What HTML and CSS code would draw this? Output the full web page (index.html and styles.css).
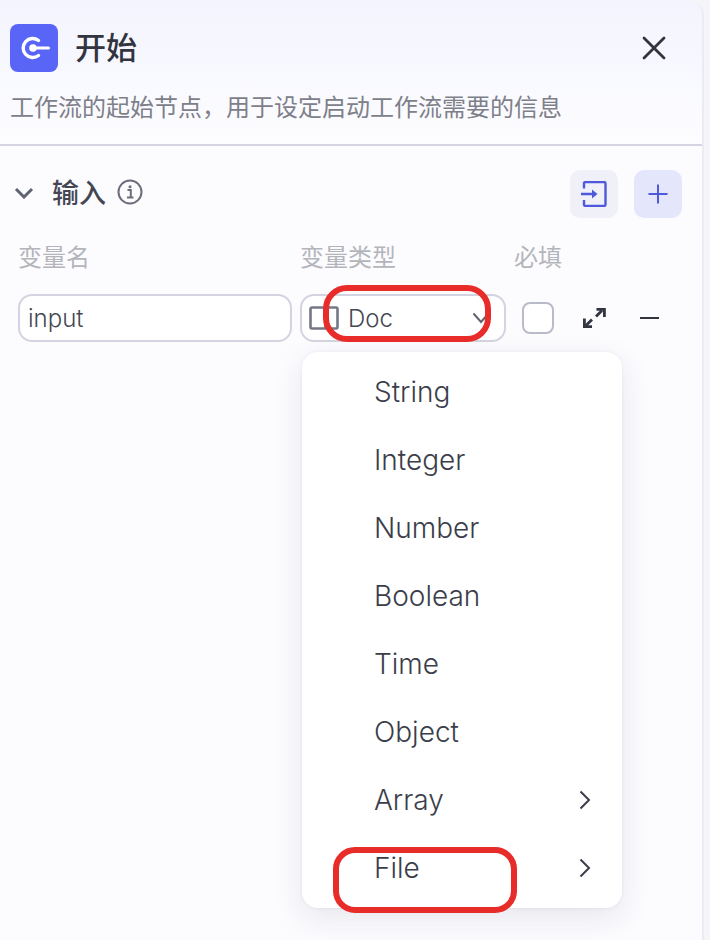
FILE: index.html
```html
<!DOCTYPE html>
<html lang="zh">
<head>
<meta charset="utf-8">
<title>开始</title>
<link rel="stylesheet" href="styles.css">
</head>
<body>
<div class="panel">
  <header class="head">
    <div class="title-row">
      <span class="logo">
        <svg viewBox="0 0 48 48" width="48" height="48"><rect width="48" height="48" rx="8" fill="#5865f6"/><path d="M28.500 16.500A9.500 9.500 0 1 0 28.500 31.500" fill="none" stroke="#fff" stroke-width="3.400" stroke-linecap="round"/><circle cx="23" cy="24" r="3.800" fill="#fff"/><path d="M24 24H38.500" stroke="#fff" stroke-width="3.200" stroke-linecap="round"/></svg>
      </span>
      <h1 class="title">开始</h1>
      <svg class="close" viewBox="0 0 24 24" width="24" height="24"><path d="M2 2L22 22M22 2L2 22" stroke="#32343f" stroke-width="2.800" stroke-linecap="round"/></svg>
    </div>
    <p class="desc">工作流的起始节点，用于设定启动工作流需要的信息</p>
  </header>
  <section class="body">
    <div class="section-row">
      <svg class="caret" viewBox="0 0 20 12" width="20" height="12"><path d="M2 2L10 10L18 2" fill="none" stroke="#5f6270" stroke-width="3"/></svg>
      <span class="section-name">输入</span>
      <svg class="info" viewBox="0 0 26 26" width="26" height="26"><circle cx="13" cy="13" r="11.500" fill="none" stroke="#6b6e7a" stroke-width="2"/><circle cx="13" cy="7.800" r="1.500" fill="#6b6e7a"/><path d="M10.500 11H13.800V18M10 18.500H16.500" fill="none" stroke="#6b6e7a" stroke-width="2"/></svg>
      <span class="spacer"></span>
      <button class="tool tool-grey">
        <svg viewBox="0 0 26 26" width="26" height="26"><path d="M3 7.500V2.500A1.500 1.500 0 0 1 4.500 1H23A1.500 1.500 0 0 1 24.500 2.500V23.500A1.500 1.500 0 0 1 23 25H4.500A1.500 1.500 0 0 1 3 23.500V19" fill="none" stroke="#4f59dc" stroke-width="2.400"/><path d="M0 13H12" stroke="#4f59dc" stroke-width="2.600"/><path d="M11 8.500L16.500 13L11 17.500Z" fill="#4f59dc"/></svg>
      </button>
      <button class="tool tool-blue">
        <svg viewBox="0 0 20 20" width="20" height="20"><path d="M10 0.500V19.500M0.500 10H19.500" stroke="#4f59dc" stroke-width="2"/></svg>
      </button>
    </div>
    <div class="labels">
      <span class="label label-name">变量名</span>
      <span class="label label-type">变量类型</span>
      <span class="label">必填</span>
    </div>
    <div class="var-row">
      <div class="field field-name">input</div>
      <div class="field field-type">
        <svg class="doc" viewBox="0 0 30 24" width="30" height="24"><path d="M1.500 3A1.500 1.500 0 0 1 3 1.500H27A1.500 1.500 0 0 1 28.500 3V21A1.500 1.500 0 0 1 27 22.500H3A1.500 1.500 0 0 1 1.500 21ZM16.500 1.500V22.500" fill="none" stroke="#747786" stroke-width="2.600"/></svg>
        <span class="type-text">Doc</span>
        <svg class="chev" viewBox="0 0 18 12" width="18" height="12"><path d="M1.500 1.500L9 10L16.500 1.500" fill="none" stroke="#5f6270" stroke-width="2"/></svg>
      </div>
      <span class="check"></span>
      <svg class="expand" viewBox="0 0 24 22" width="24" height="22"><path d="M20 3.500L14 9.500M4 18.500L10 12.500" stroke="#32343f" stroke-width="2.800"/><path d="M14.500 2.400H22.400V10" fill="none" stroke="#32343f" stroke-width="2.800"/><path d="M2.400 11.500V19.600H10" fill="none" stroke="#32343f" stroke-width="2.800"/></svg>
      <span class="minus"></span>
    </div>
    <div class="menu">
      <div class="item">String</div>
      <div class="item">Integer</div>
      <div class="item">Number</div>
      <div class="item">Boolean</div>
      <div class="item">Time</div>
      <div class="item">Object</div>
      <div class="item">Array<svg viewBox="0 0 12 20" width="12" height="20"><path d="M1.500 1.500L10 10L1.500 18.500" fill="none" stroke="#3b3e4a" stroke-width="2"/></svg></div>
      <div class="item">File<svg viewBox="0 0 12 20" width="12" height="20"><path d="M1.500 1.500L10 10L1.500 18.500" fill="none" stroke="#3b3e4a" stroke-width="2"/></svg></div>
    </div>
    <span class="mark mark-doc"></span>
    <span class="mark mark-file"></span>
  </section>
</div>
</body>
</html>
```
FILE: styles.css
```css
* { box-sizing: border-box; }
html, body { margin: 0; height: 100%; overflow: hidden; }
body {
  background: #f5f5f9;
  font-family: Inter, "Noto Sans CJK SC", sans-serif;
  color: #444753;
}
.panel {
  width: 704px;
  height: 940px;
  background: #fcfcff;
  border-right: 2px solid #ebebf3;
  border-top-right-radius: 16px;
  overflow: hidden;
  display: flex;
  flex-direction: column;
}
.head {
  height: 146px;
  padding: 24px 10px 0;
  border-bottom: 2px solid #d5d4e4;
  background: linear-gradient(180deg, #f3f4fe 0%, #fdfdff 100%);
}
.title-row { display: flex; align-items: center; height: 48px; }
.logo { width: 48px; height: 48px; display: block; }
.logo svg { display: block; }
.title {
  margin: 0 0 0 17px;
  font-size: 31px;
  line-height: 48px;
  font-weight: 500;
  color: #32343f;
  flex: 1;
}
.close { margin-right: 26px; }
.desc {
  margin: 20px 0 0 0;
  font-size: 24px;
  line-height: 32px;
  color: #7e8089;
  white-space: nowrap;
}
.body { position: relative; flex: 1; padding: 24px 20px 0 10px; }
.section-row { display: flex; align-items: center; height: 48px; }
.caret { margin: -2px 0 0 4px; }
.section-name {
  margin: -6px 0 0 18px;
  font-size: 27px;
  font-weight: 500;
  color: #444753;
}
.info { margin: -4px 0 0 11px; }
.spacer { flex: 1; }
.tool {
  width: 48px;
  height: 48px;
  border: 0;
  border-radius: 10px;
  padding: 0;
  margin-left: 16px;
  display: flex;
  align-items: center;
  justify-content: center;
}
.tool-grey { background: #eff0f8; }
.tool-blue { background: #e4e6fb; }
.labels { display: flex; margin: 20px 0 0 8px; height: 34px; align-items: center; }
.label { font-size: 24px; color: #b4b5bb; }
.label-name { width: 282px; }
.label-type { width: 214px; }
.var-row { display: flex; align-items: center; margin: 22px 0 0 8px; height: 48px; }
.field {
  height: 48px;
  border: 2px solid #d3d4e0;
  border-radius: 14px;
  background: #fff;
  display: flex;
  align-items: center;
  font-size: 24px;
  font-weight: 300;
  color: #444753;
}
.field-name { width: 274px; padding-left: 8px; }
.field-type { width: 206px; margin-left: 8px; padding: 0 14px 0 7px; }
.type-text { margin-left: 9px; flex: 1; }
.check {
  width: 32px;
  height: 32px;
  margin-left: 16px;
  border: 2px solid #b9bbc8;
  border-radius: 8px;
  background: #fff;
}
.expand { margin-left: 28px; }
.minus { width: 19px; height: 2px; margin-left: 34px; background: #32343f; }
.menu {
  position: absolute;
  left: 302px;
  top: 206px;
  width: 320px;
  height: 556px;
  padding: 6px 0;
  background: #fff;
  border-radius: 16px;
  box-shadow: 0 10px 30px rgba(40, 44, 80, 0.10), 0 0 4px rgba(40, 44, 80, 0.06);
}
.item {
  height: 68px;
  padding: 0 31px 0 72px;
  display: flex;
  align-items: center;
  justify-content: space-between;
  font-size: 28px;
  font-weight: 300;
  color: #3b3e4a;
}
.mark {
  position: absolute;
  border: 6px solid #e72c2a;
  background: transparent;
}
.mark-doc { left: 323px; top: 139px; width: 168px; height: 57px; border-radius: 24px; }
.mark-file { left: 333px; top: 701px; width: 184px; height: 66px; border-radius: 22px; }
```
